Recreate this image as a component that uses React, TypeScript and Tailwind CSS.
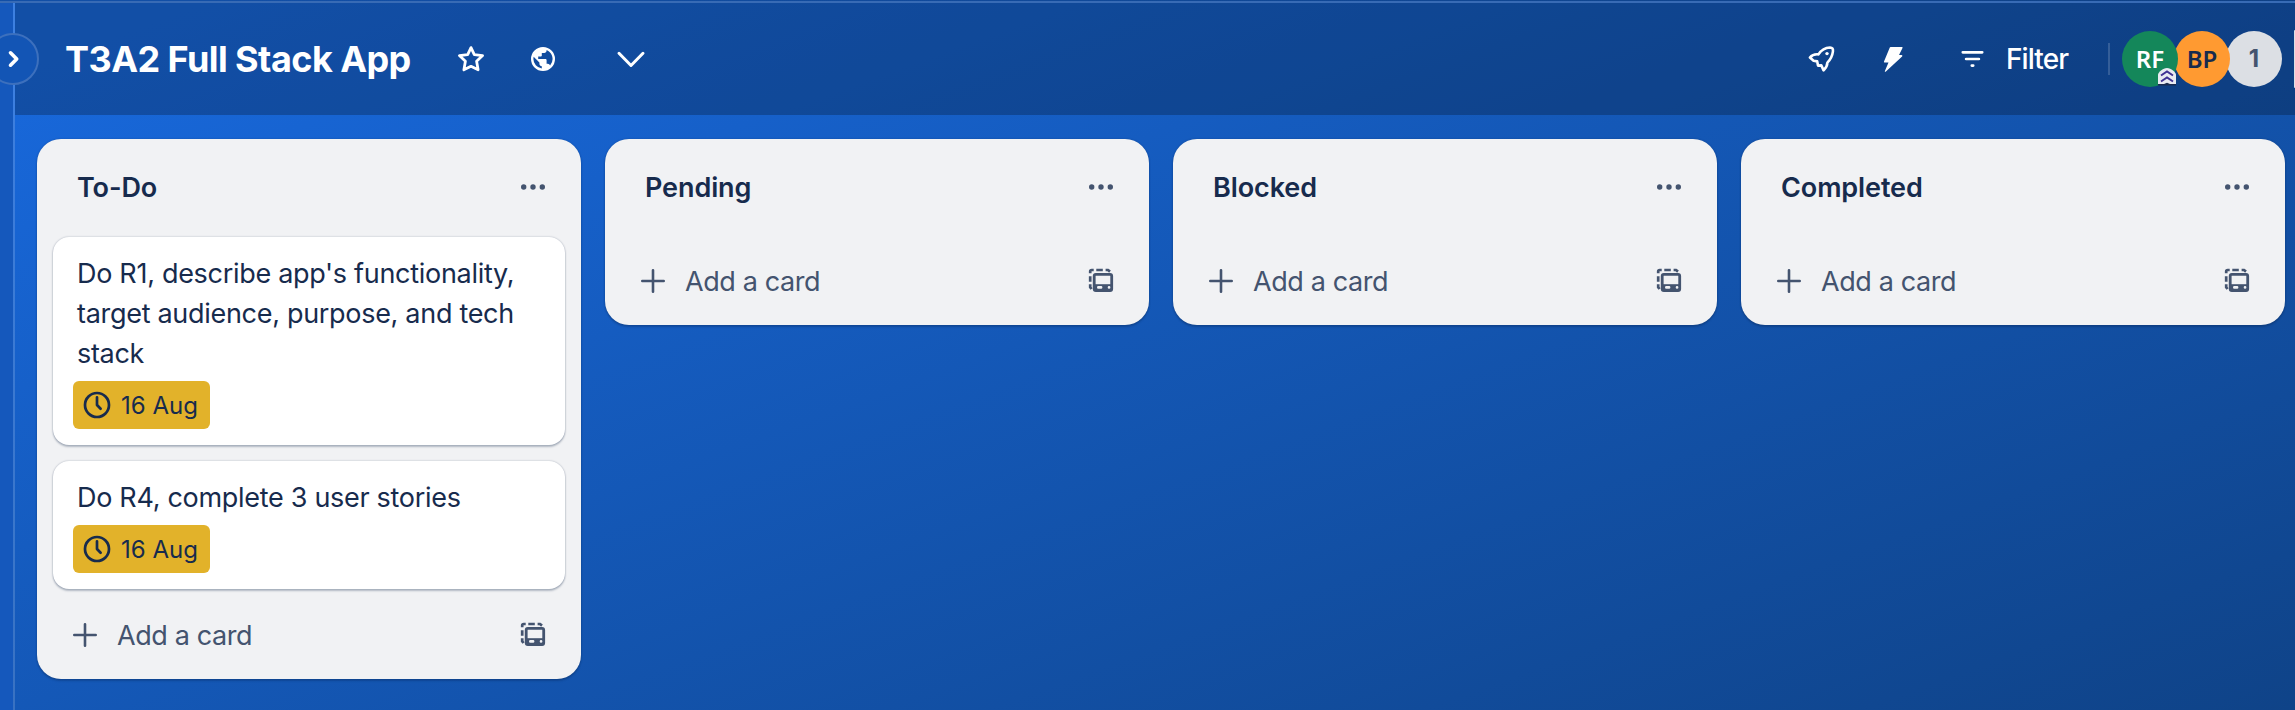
import React from "react";

type Card = { text: string[]; due: string };
type List = { title: string; cards: Card[] };

const lists: List[] = [
  {
    title: "To-Do",
    cards: [
      { text: ["Do R1, describe app's functionality,", "target audience, purpose, and tech", "stack"], due: "16 Aug" },
      { text: ["Do R4, complete 3 user stories"], due: "16 Aug" },
    ],
  },
  { title: "Pending", cards: [] },
  { title: "Blocked", cards: [] },
  { title: "Completed", cards: [] },
];

function StarIcon() {
  return (
    <svg className="size-8" viewBox="0 0 32 32" fill="none" stroke="currentColor" strokeWidth="2.8" strokeLinejoin="round">
      <path d="M16 4.600l3.300 7.100 8.300.9-6 5.600 1.500 8.600-7.100-3.500-7.100 3.500 1.500-8.600-6-5.600 8.300-.9z" />
    </svg>
  );
}

function GlobeIcon() {
  return (
    <svg className="size-8" viewBox="0 0 24 24" fill="currentColor">
      <path d="M12 21a9 9 0 1 0 0-18 9 9 0 0 0 0 18zm-.9-1.863A7.19 7.19 0 0 1 4.8 12c0-.558.072-1.089.189-1.611L9.3 14.7v.9c0 .99.81 1.8 1.8 1.8v1.737zm6.21-2.286A1.786 1.786 0 0 0 15.6 15.6h-.9v-2.7c0-.495-.405-.9-.9-.9H8.4v-1.8h1.8c.495 0 .9-.405.9-.9V7.5h1.8c.99 0 1.8-.81 1.8-1.8v-.369c2.637 1.071 4.5 3.654 4.5 6.669a7.17 7.17 0 0 1-1.89 4.851z" />
    </svg>
  );
}

function RocketIcon() {
  return (
    <svg className="size-8" viewBox="0 0 32 32" fill="none" stroke="currentColor" strokeWidth="2.6" strokeLinejoin="round" strokeLinecap="round">
      <path d="M4.900 14.600C7 12 10 11 13.500 11.400C16 7.500 20.500 4.600 25 4.500C27.400 4.500 28.300 6 27.900 8.600C27.400 12.500 25.500 16.500 22.400 19.600C22.400 22.500 21 25 18.600 27.400L16.300 22.400L13 22.600L12.200 18.400L8.600 17.800Z" />
      <circle cx="22" cy="10.600" r="1.700" fill="currentColor" stroke="none" />
    </svg>
  );
}

function BoltIcon() {
  return (
    <svg className="size-8" viewBox="0 0 32 32" fill="currentColor">
      <path d="M13.600 4h11.300a.6.6 0 0 1 .6.900L22 12h2.500a.8.8 0 0 1 .6 1.400L8.900 28.600c-.6.500-1.300 0-1-.7L11.500 19.500H7.600a.7.700 0 0 1-.6-1L12.800 4.500A.9.9 0 0 1 13.600 4z" />
    </svg>
  );
}

function PlusIcon() {
  return (
    <svg className="size-8" viewBox="0 0 32 32" fill="none" stroke="currentColor" strokeWidth="2.600" strokeLinecap="round">
      <path d="M16 5.300v21.400M5.300 16h21.400" />
    </svg>
  );
}

function TemplateIcon() {
  return (
    <svg className="size-8" viewBox="0 0 32 32" fill="none" stroke="currentColor">
      <rect x="9.200" y="9.300" width="17.500" height="16.400" rx="1.600" strokeWidth="2.800" />
      <path d="M9 19.200h18v6.300H9z" fill="currentColor" stroke="none" />
      <path d="M13.300 22.400h2.800M24 22.400h.1" stroke="#f1f2f4" strokeWidth="2.600" strokeLinecap="round" />
      <path d="M5.200 8.300V6.500A1.500 1.500 0 0 1 6.700 5h2M11.300 5h6.500M20.600 5h2.400l2 1.600M5.200 11.200v5.600M5.200 19.300v3l1.400 1.700" strokeWidth="2.700" />
    </svg>
  );
}

function ClockIcon() {
  return (
    <svg className="size-8" viewBox="0 0 32 32" fill="none" stroke="currentColor" strokeWidth="2.700" strokeLinecap="round" strokeLinejoin="round">
      <circle cx="16" cy="16" r="12" />
      <path d="M16 8.300V16l3.600 3.700" />
    </svg>
  );
}

function Avatar({ label, className }: { label: string; className: string }) {
  return (
    <div className={"relative flex size-14 items-center justify-center rounded-full pb-px text-[24px] leading-none " + className}>
      {label}
    </div>
  );
}

function Header() {
  return (
    <header className="flex h-28 shrink-0 items-center bg-black/24 pl-[50px] text-white">
      <h1 className="w-[348px] whitespace-nowrap text-[36px] font-bold leading-none tracking-[-0.56px]">T3A2 Full Stack App</h1>
      <div className="ml-[42px] flex items-center">
        <StarIcon />
        <span className="ml-10 flex"><GlobeIcon /></span>
        <svg className="ml-14 size-8" viewBox="0 0 32 32" fill="none" stroke="currentColor" strokeWidth="3" strokeLinecap="round" strokeLinejoin="round">
          <path d="M4 10.300l12 12.200 12-12.200" />
        </svg>
      </div>
      <div className="ml-auto flex items-center">
        <RocketIcon />
        <span className="ml-10 flex"><BoltIcon /></span>
        <svg className="ml-12 size-8" viewBox="0 0 32 32" fill="none" stroke="currentColor" strokeWidth="2.700" strokeLinecap="round">
          <path d="M5.800 9.300h19.400M9.100 16h12.800M14.800 22.600h1.400" />
        </svg>
        <span className="ml-[17px] w-[65px] text-[28px] font-medium leading-none tracking-[-0.9px]">Filter</span>
        <span className="ml-[37px] h-8 w-0.5 bg-white/16" />
        <div className="ml-3 flex">
          <div className="relative z-20">
            <Avatar label="RF" className="bg-[#14875a] font-['Noto_Sans',sans-serif] font-semibold text-white" />
            <svg className="absolute left-9 top-[37px] h-[19px] w-[18px]" viewBox="0 0 18 19">
              <path d="M0 6.500C0 4.500 5 0 9 0s9 4.500 9 6.500V16H0z" fill="#e9eaf2" />
              <path d="M0 16h6l3-1.200 3 1.200h6v1.600H0z" fill="#1a2b4f" />
              <path d="M3 7.500l6-4 6 4M3 13.500l6-4 6 4" fill="none" stroke="#403294" strokeWidth="2" />
            </svg>
          </div>
          <Avatar label="BP" className="z-10 -ml-1 bg-[#ff9a31] font-['Noto_Sans',sans-serif] font-semibold text-[#172b4d]" />
          <Avatar label="1" className="-ml-1 bg-[#dcdfe4] font-bold text-[#44546f]" />
        </div>
        <span className="ml-3 h-[58px] w-px rounded-l-sm bg-[#dcdfe4]" />
      </div>
    </header>
  );
}

function CardView({ card }: { card: Card }) {
  return (
    <article className="rounded-2xl bg-white px-6 pb-4 pt-[17px] shadow-[0_2px_2px_#091e4240,0_0_2px_#091e424f]">
      <p className="mb-[7px] whitespace-nowrap text-[27px] leading-10 tracking-[-0.3px] text-[#172b4d]">
        {card.text.map((line) => (
          <span key={line} className="block">{line}</span>
        ))}
      </p>
      <div className="-ml-1 flex h-12 w-[137px] items-center rounded-md bg-[#e2b22a] pl-2 text-[#172b4d]">
        <ClockIcon />
        <span className="ml-2 whitespace-nowrap pt-px text-[24px] leading-none">{card.due}</span>
      </div>
    </article>
  );
}

function ListView({ list }: { list: List }) {
  return (
    <section className="w-[544px] shrink-0 rounded-3xl bg-[#f1f2f4] shadow-[0_2px_2px_#091e4240,0_0_2px_#091e424f]">
      <div className="flex h-24 items-center justify-between pl-10 pr-8">
        <h2 className="text-[27px] font-semibold leading-none tracking-[-0.1px] text-[#172b4d]">{list.title}</h2>
        <svg className="size-8" viewBox="0 0 32 32" fill="#44546f">
          <circle cx="6.700" cy="16" r="2.700" /><circle cx="16" cy="16" r="2.700" /><circle cx="25.300" cy="16" r="2.700" />
        </svg>
      </div>
      <div className="flex flex-col gap-4 px-4 pt-0.5">
        {list.cards.map((card) => <CardView key={card.text[0]} card={card} />)}
      </div>
      <div className={"flex h-[88px] items-center px-8 text-[#44546f] " + (list.cards.length > 0 ? "mt-0.5" : "")}>
        <PlusIcon />
        <span className="ml-4 text-[27px] leading-none tracking-[-0.4px]">Add a card</span>
        <span className="ml-auto flex"><TemplateIcon /></span>
      </div>
    </section>
  );
}

export default function App() {
  return (
    <div className="h-[710px] w-[2295px] overflow-hidden bg-[linear-gradient(160deg,#1868db_5%,#0f4388_100%)] font-[Inter,sans-serif]">
      <div className="h-px bg-black/24" />
      <div className="h-0.5 bg-[#386bb5]" />
      <div className="flex h-[707px]">
        <aside className="relative w-[15px] shrink-0 border-r-2 border-white/16 bg-[#1558bc] bg-clip-padding">
          <button className="absolute -left-[13px] top-[30px] flex size-[52px] items-center justify-center rounded-full border-2 border-[#3d70bd] bg-[#1355b5] text-white">
            <svg className="size-8" viewBox="0 0 32 32" fill="none" stroke="currentColor" strokeWidth="3.600" strokeLinecap="round" strokeLinejoin="round">
              <path d="M13.500 9.800l6.200 6.200-6.200 6.200" />
            </svg>
          </button>
        </aside>
        <main className="flex min-w-0 flex-1 flex-col">
          <Header />
          <div className="flex items-start gap-6 pl-[22px] pt-6">
            {lists.map((list) => <ListView key={list.title} list={list} />)}
          </div>
        </main>
      </div>
    </div>
  );
}
